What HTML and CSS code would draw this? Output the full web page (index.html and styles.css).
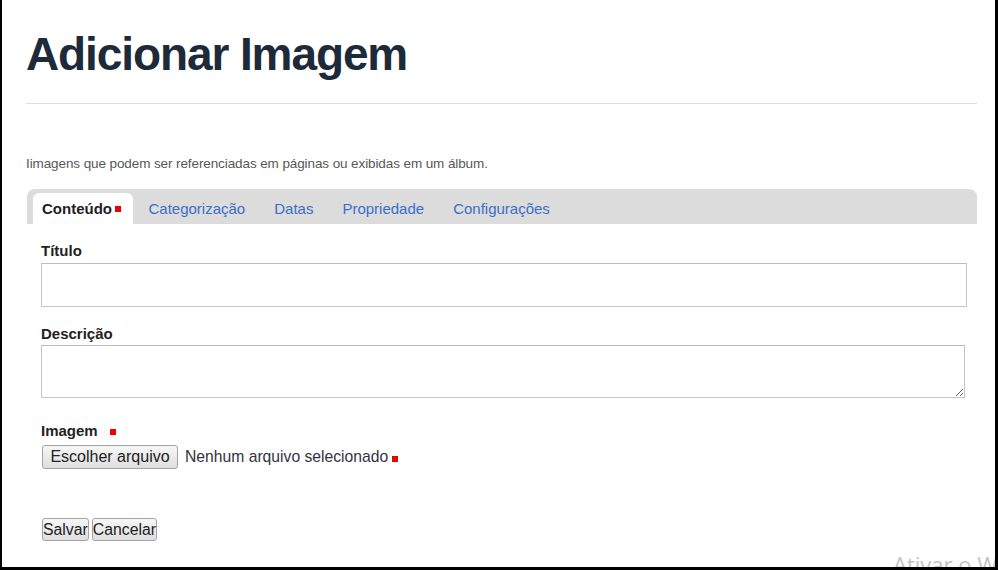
FILE: index.html
```html
<!DOCTYPE html>
<html lang="pt-BR">
<head>
<meta charset="utf-8">
<title>Adicionar Imagem</title>
<link rel="stylesheet" href="styles.css">
</head>
<body>
<div class="frame">
  <div class="page">
    <h1 class="title">Adicionar Imagem</h1>
    <hr class="rule">
    <p class="desc">Iimagens que podem ser referenciadas em páginas ou exibidas em um álbum.</p>
    <div class="tabs">
      <span class="tab tab-active">Conteúdo <span class="req"></span></span>
      <span class="tab">Categorização</span>
      <span class="tab">Datas</span>
      <span class="tab">Propriedade</span>
      <span class="tab">Configurações</span>
    </div>
    <form class="form">
      <label class="label label-first">Título</label>
      <input class="field" type="text">
      <label class="label label-desc">Descrição</label>
      <textarea class="area"></textarea>
      <label class="label label-img">Imagem <span class="req req-gap"></span></label>
      <div class="filerow">
        <button type="button" class="btn btn-file">Escolher arquivo</button>
        <span class="nofile">Nenhum arquivo selecionado</span><span class="req req-file"></span>
      </div>
      <div class="actions">
        <button type="button" class="btn btn-tight">Salvar</button>
        <button type="button" class="btn btn-tight">Cancelar</button>
      </div>
    </form>
  </div>
  <div class="watermark">Ativar o Windows</div>
</div>
</body>
</html>
```

FILE: styles.css
```css
html, body {
  margin: 0;
  padding: 0;
  background: #fff;
}

.frame {
  position: relative;
  width: 998px;
  height: 570px;
  box-sizing: border-box;
  border-left: 2px solid #000;
  border-right: 3px solid #000;
  border-bottom: 3px solid #000;
  overflow: hidden;
  background: #fff;
  font-family: "Liberation Sans", Arial, sans-serif;
}

.page {
  padding: 0 18px 0 24px;
}

.title {
  margin: 28px 0 0;
  font-size: 46px;
  line-height: 52px;
  font-weight: 700;
  letter-spacing: -1.1px;
  color: #1c2a39;
}

.rule {
  margin: 23px 0 0;
  border: 0;
  border-top: 1px solid #dcdcdc;
  height: 0;
}

.desc {
  margin: 52px 0 0;
  font-size: 13.5px;
  line-height: 16px;
  letter-spacing: -0.1px;
  color: #585858;
}

.tabs {
  margin-top: 17px;
  height: 35px;
  box-sizing: border-box;
  background: #dcdcdc;
  border-radius: 8px 8px 0 0;
  display: flex;
  align-items: flex-end;
  padding-left: 6px;
  margin-left: 1px;
}

.tab {
  height: 31px;
  display: flex;
  align-items: center;
  padding: 0 14.5px;
  font-size: 15px;
  color: #3a6fc9;
}

.tab-active {
  background: #fff;
  border-radius: 6px 6px 0 0;
  padding: 0 12px 0 9px;
  margin-right: 1px;
  font-weight: 700;
  color: #1e1e1e;
  gap: 3px;
}

.req {
  display: inline-block;
  width: 6px;
  height: 6px;
  background: #ee0000;
}

.form {
  display: flex;
  flex-direction: column;
  align-items: flex-start;
  padding: 0 10px 0 15px;
}

.label {
  font-size: 15px;
  line-height: 16px;
  font-weight: 700;
  color: #222;
}

.label-first { margin-top: 19px; }
.label-desc { margin-top: 19px; }
.label-img { margin-top: 25px; display: flex; align-items: center; }

.req-gap {
  margin-left: 12px;
  margin-top: 2px;
}

.field {
  margin: 4px 0 0;
  width: 100%;
  height: 44px;
  box-sizing: border-box;
  border: 1px solid #c6c6c6;
  border-top-color: #bdbdbd;
  background: #fff;
  padding: 0 6px;
  font: 15px "Liberation Sans", Arial, sans-serif;
}

.area {
  margin: 3px 0 0;
  width: calc(100% - 2px);
  height: 53px;
  box-sizing: border-box;
  border: 1px solid #c6c6c6;
  border-top-color: #bdbdbd;
  background: #fff;
  padding: 4px 6px;
  font: 15px "Liberation Sans", Arial, sans-serif;
  resize: both;
}

.filerow {
  margin-top: 6px;
  display: flex;
  align-items: center;
  height: 24px;
}

.btn {
  font: 16px "Liberation Sans", Arial, sans-serif;
  color: #222;
  background: linear-gradient(#f7f7f7, #dedede);
  border: 1px solid #a3a3a3;
  border-radius: 3px;
  margin: 0;
  cursor: default;
}

.btn-file {
  height: 24px;
  width: 136px;
  padding: 0 7px;
  margin-left: 1px;
}

.nofile {
  margin-left: 7px;
  font-size: 15.7px;
  color: #35323f;
}

.req-file {
  margin-left: 4px;
  margin-top: 4px;
}

.actions {
  margin-top: 49px;
  display: flex;
  gap: 3px;
}

.btn-tight {
  height: 23px;
  padding: 0;
  font-size: 15.8px;
  border-radius: 3px;
  margin-left: 1px;
}

.btn-tight + .btn-tight {
  margin-left: 0;
}

.watermark {
  position: absolute;
  left: 891px;
  top: 549px;
  font-family: "Open Sans", "Noto Sans", sans-serif;
  font-size: 22px;
  line-height: 30px;
  color: #c4c4c4;
  white-space: nowrap;
}
```
